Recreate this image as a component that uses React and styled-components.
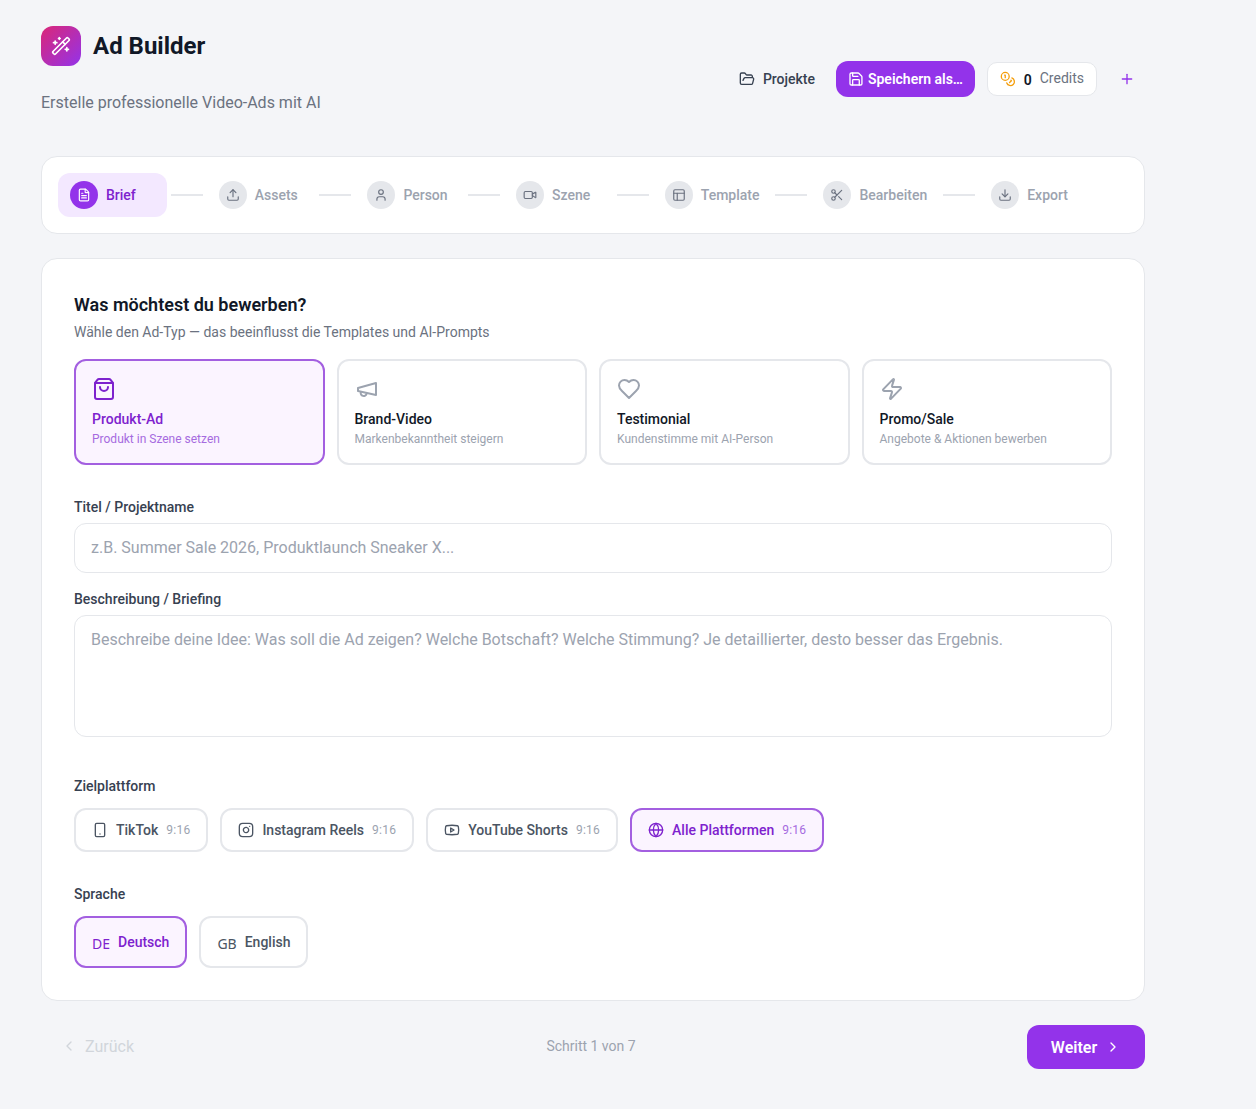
import styled, { createGlobalStyle } from 'styled-components'
import {
  WandSparkles, FolderOpen, Save, Coins, Plus, FileText, Upload, User, Video, Layout,
  Scissors, Download, ShoppingBag, Zap, Smartphone, Instagram, Youtube,
  Globe, ChevronLeft, ChevronRight,
} from 'lucide-react'

const LineIcon = ({ size, children }) => (
  <svg width={size} height={size} viewBox="0 0 24 24" fill="none" stroke="currentColor" strokeWidth="2" strokeLinecap="round" strokeLinejoin="round">
    {children}
  </svg>
)

const MegaphoneIcon = ({ size }) => (
  <LineIcon size={size}>
    <path d="m3 11 18-5v12L3 14v-3z" />
    <path d="M11.6 16.8a3 3 0 1 1-5.8-1.6" />
  </LineIcon>
)

const HeartIcon = ({ size }) => (
  <LineIcon size={size}>
    <path d="M19 14c1.49-1.46 3-3.21 3-5.5A5.5 5.5 0 0 0 16.5 3c-1.76 0-3 .5-4.5 2-1.5-1.5-2.74-2-4.5-2A5.5 5.5 0 0 0 2 8.5c0 2.3 1.5 4.05 3 5.5l7 7Z" />
  </LineIcon>
)

const steps = [
  { label: 'Brief', icon: FileText, active: true },
  { label: 'Assets', icon: Upload },
  { label: 'Person', icon: User },
  { label: 'Szene', icon: Video },
  { label: 'Template', icon: Layout },
  { label: 'Bearbeiten', icon: Scissors },
  { label: 'Export', icon: Download },
]

const adTypes = [
  { title: 'Produkt-Ad', text: 'Produkt in Szene setzen', icon: ShoppingBag, active: true },
  { title: 'Brand-Video', text: 'Markenbekanntheit steigern', icon: MegaphoneIcon },
  { title: 'Testimonial', text: 'Kundenstimme mit AI-Person', icon: HeartIcon },
  { title: 'Promo/Sale', text: 'Angebote & Aktionen bewerben', icon: Zap },
]

const platforms = [
  { label: 'TikTok', icon: Smartphone },
  { label: 'Instagram Reels', icon: Instagram },
  { label: 'YouTube Shorts', icon: Youtube },
  { label: 'Alle Plattformen', icon: Globe, active: true },
]

export default function App() {
  return (
    <Page>
      <GlobalStyle />
      <Header>
        <Brand>
          <BrandRow>
            <Logo><WandSparkles size={20} color="#fff" /></Logo>
            <Title>Ad Builder</Title>
          </BrandRow>
          <Subtitle>Erstelle professionelle Video-Ads mit AI</Subtitle>
        </Brand>
        <Actions>
          <GhostButton><FolderOpen size={16} />Projekte</GhostButton>
          <SaveButton><Save size={16} />Speichern als…</SaveButton>
          <Credits>
            <Coins size={16} color="#f59e0b" />
            <CreditCount>0</CreditCount>
            <CreditLabel>Credits</CreditLabel>
          </Credits>
          <AddButton><Plus size={16} /></AddButton>
        </Actions>
      </Header>

      <Stepper>
        {steps.map((step, i) => (
          <StepGroup key={step.label}>
            {i > 0 && <StepLine />}
            <Step $active={step.active}>
              <StepCircle $active={step.active}><step.icon size={14} /></StepCircle>
              {step.label}
            </Step>
          </StepGroup>
        ))}
      </Stepper>

      <Card>
        <CardTitle>Was möchtest du bewerben?</CardTitle>
        <CardText>Wähle den Ad-Typ — das beeinflusst die Templates und AI-Prompts</CardText>
        <TypeGrid>
          {adTypes.map((type) => (
            <TypeCard key={type.title} $active={type.active}>
              <TypeIcon $active={type.active}><type.icon size={24} /></TypeIcon>
              <TypeTitle $active={type.active}>{type.title}</TypeTitle>
              <TypeText $active={type.active}>{type.text}</TypeText>
            </TypeCard>
          ))}
        </TypeGrid>

        <FieldLabel>Titel / Projektname</FieldLabel>
        <TextInput placeholder="z.B. Summer Sale 2026, Produktlaunch Sneaker X..." />
        <BriefLabel>Beschreibung / Briefing</BriefLabel>
        <TextArea placeholder="Beschreibe deine Idee: Was soll die Ad zeigen? Welche Botschaft? Welche Stimmung? Je detaillierter, desto besser das Ergebnis." />

        <PlatformLabel>Zielplattform</PlatformLabel>
        <ChoiceRow>
          {platforms.map((p) => (
            <PlatformButton key={p.label} $active={p.active}>
              <p.icon size={16} />
              {p.label}
              <Ratio $active={p.active}>9:16</Ratio>
            </PlatformButton>
          ))}
        </ChoiceRow>

        <LanguageLabel>Sprache</LanguageLabel>
        <ChoiceRow>
          <LanguageButton $active><Flag>DE</Flag>Deutsch</LanguageButton>
          <LanguageButton><Flag>GB</Flag>English</LanguageButton>
        </ChoiceRow>
      </Card>

      <Footer>
        <BackButton><ChevronLeft size={16} />Zurück</BackButton>
        <StepCount>Schritt 1 von 7</StepCount>
        <NextButton>Weiter<ChevronRight size={16} /></NextButton>
      </Footer>
    </Page>
  )
}

/*---> Styles <---*/
const GlobalStyle = createGlobalStyle`
  * { box-sizing: border-box; }
  html, body { margin: 0; padding: 0; background: #f4f5f8; }
  body { font-family: Roboto, "Liberation Sans", sans-serif; color: #111827; }
  button, input, textarea { font-family: inherit; }
`

const Page = styled.div`
  width: 1186px;
  min-height: 1109px;
  padding: 26px 0 40px 41px;
`

const Header = styled.header`
  width: 1104px;
  height: 106px;
  margin-bottom: 24px;
  display: flex;
  justify-content: space-between;
  align-items: center;
`

const Brand = styled.div`
  height: 106px;
  display: flex;
  flex-direction: column;
`

const BrandRow = styled.div`
  display: flex;
  align-items: center;
  gap: 12px;
`

const Logo = styled.div`
  width: 40px;
  height: 40px;
  border-radius: 12px;
  background: linear-gradient(135deg, #db2777, #9333ea);
  display: flex;
  align-items: center;
  justify-content: center;
`

const Title = styled.h1`
  margin: 0;
  font-size: 24px;
  line-height: 40px;
  font-weight: 700;
  color: #111827;
`

const Subtitle = styled.p`
  margin: 25px 0 0;
  font-size: 16px;
  line-height: 24px;
  color: #6b7280;
`

const Actions = styled.div`
  margin-right: 10px;
  display: flex;
  align-items: center;
`

const GhostButton = styled.button`
  height: 36px;
  padding: 0 20px 0 0;
  border: 0;
  background: transparent;
  display: flex;
  align-items: center;
  gap: 8px;
  font-size: 14px;
  font-weight: 500;
  color: #374151;
  transform: translateX(-1px);
`

const SaveButton = styled.button`
  width: 139px;
  height: 36px;
  padding: 0 12px;
  border: 0;
  border-radius: 12px;
  background: #9333ea;
  color: #fff;
  display: flex;
  align-items: center;
  gap: 4px;
  font-size: 14px;
  font-weight: 600;
  white-space: nowrap;
`

const Credits = styled.div`
  width: 110px;
  height: 34px;
  margin-left: 12px;
  padding: 0 12px;
  border: 1px solid #e5e7eb;
  border-radius: 10px;
  background: #fff;
  display: flex;
  align-items: center;
  gap: 8px;
`

const CreditCount = styled.span`
  padding-top: 2px;
  font-size: 14px;
  font-weight: 600;
  color: #111827;
`

const CreditLabel = styled.span`
  padding-bottom: 2px;
  font-size: 14px;
  color: #6b7280;
`

const AddButton = styled.button`
  width: 16px;
  height: 16px;
  margin-left: 22px;
  padding: 0;
  border: 0;
  background: transparent;
  color: #9333ea;
  display: flex;
`

const Stepper = styled.nav`
  width: 1104px;
  height: 78px;
  padding: 0 16px;
  border: 1px solid #e5e7eb;
  border-radius: 16px;
  background: #fff;
  display: flex;
  align-items: center;
`

const StepGroup = styled.div`
  display: flex;
  align-items: center;
`

const StepLine = styled.div`
  width: 32px;
  height: 2px;
  margin: 0 4px;
  background: #e5e7eb;
`

const Step = styled.div`
  min-width: 108.7px;
  height: 44px;
  padding: 0 12px;
  border-radius: 12px;
  display: flex;
  align-items: center;
  gap: 8px;
  font-size: 14px;
  font-weight: 500;
  background: ${(props) => (props.$active ? '#f3e8ff' : 'transparent')};
  color: ${(props) => (props.$active ? '#7e22ce' : '#9ca3af')};
`

const StepCircle = styled.div`
  width: 28px;
  height: 28px;
  border-radius: 50%;
  display: flex;
  align-items: center;
  justify-content: center;
  background: ${(props) => (props.$active ? '#9333ea' : '#e5e7eb')};
  color: ${(props) => (props.$active ? '#fff' : '#6b7280')};
`

const Card = styled.main`
  width: 1104px;
  height: 743px;
  margin-top: 24px;
  padding: 32px;
  border: 1px solid #e5e7eb;
  border-radius: 16px;
  background: #fff;
`

const CardTitle = styled.h2`
  margin: 0;
  font-size: 18px;
  line-height: 28px;
  font-weight: 600;
  color: #111827;
`

const CardText = styled.p`
  margin: 3px 0 0;
  font-size: 14px;
  line-height: 20px;
  color: #6b7280;
`

const TypeGrid = styled.div`
  margin-top: 17px;
  display: grid;
  grid-template-columns: repeat(4, 1fr);
  gap: 12px;
`

const TypeCard = styled.div`
  height: 106px;
  padding: 16px;
  border: 2px solid ${(props) => (props.$active ? '#a35fe0' : '#e5e7eb')};
  border-radius: 12px;
  background: ${(props) => (props.$active ? '#fbf4ff' : '#fff')};
`

const TypeIcon = styled.div`
  height: 24px;
  display: flex;
  color: ${(props) => (props.$active ? '#7e22ce' : '#9ca3af')};
`

const TypeTitle = styled.div`
  margin-top: 8px;
  font-size: 14px;
  line-height: 20px;
  font-weight: 500;
  color: ${(props) => (props.$active ? '#7e22ce' : '#111827')};
`

const TypeText = styled.div`
  margin-top: 2px;
  font-size: 12px;
  line-height: 16px;
  color: ${(props) => (props.$active ? '#a66be0' : '#9ca3af')};
`

const FieldLabel = styled.label`
  display: block;
  margin-top: 32px;
  font-size: 14px;
  line-height: 20px;
  font-weight: 500;
  color: #374151;
`

const BriefLabel = styled(FieldLabel)`
  margin-top: 16px;
`

const PlatformLabel = styled(FieldLabel)`
  margin-top: 39px;
`

const LanguageLabel = styled(FieldLabel)`
  margin-top: 32px;
`

const TextInput = styled.input`
  display: block;
  width: 100%;
  height: 50px;
  margin-top: 6px;
  padding: 0 16px 2px;
  border: 1px solid #e5e7eb;
  border-radius: 12px;
  background: #fff;
  font-size: 16px;
  &::placeholder { color: #9ca3af; }
`

const TextArea = styled.textarea`
  display: block;
  width: 100%;
  height: 122px;
  margin-top: 6px;
  padding: 12px 16px;
  border: 1px solid #e5e7eb;
  border-radius: 12px;
  background: #fff;
  font-size: 16px;
  line-height: 24px;
  resize: none;
  &::placeholder { color: #9ca3af; }
`

const ChoiceRow = styled.div`
  margin-top: 12px;
  display: flex;
  gap: 12px;
`

const PlatformButton = styled.button`
  height: 44px;
  padding: 0 16px;
  border: 2px solid ${(props) => (props.$active ? '#a35fe0' : '#e5e7eb')};
  border-radius: 12px;
  background: ${(props) => (props.$active ? '#fbf4ff' : '#fff')};
  color: ${(props) => (props.$active ? '#7e22ce' : '#4b5563')};
  display: flex;
  align-items: center;
  gap: 8px;
  font-size: 14px;
  font-weight: 500;
`

const Ratio = styled.span`
  font-size: 12px;
  font-weight: 400;
  letter-spacing: 0.25px;
  color: ${(props) => (props.$active ? '#a66be0' : '#9ca3af')};
`

const LanguageButton = styled.button`
  height: 52px;
  padding: 0 16px;
  border: 2px solid ${(props) => (props.$active ? '#a35fe0' : '#e5e7eb')};
  border-radius: 12px;
  background: ${(props) => (props.$active ? '#fbf4ff' : '#fff')};
  color: ${(props) => (props.$active ? '#7e22ce' : '#4b5563')};
  display: flex;
  align-items: center;
  gap: 8px;
  font-size: 14px;
  font-weight: 500;
`

const Flag = styled.span`
  padding-top: 3px;
  font-family: "Noto Sans", sans-serif;
  font-size: 14px;
  font-weight: 400;
`

const Footer = styled.footer`
  width: 1104px;
  height: 44px;
  margin-top: 24px;
  display: flex;
  align-items: center;
  justify-content: space-between;
`

const BackButton = styled.button`
  width: 120px;
  padding: 0 0 2px 20px;
  border: 0;
  background: transparent;
  color: #d1d5db;
  display: flex;
  align-items: center;
  gap: 8px;
  font-size: 16px;
`

const StepCount = styled.span`
  margin-left: -6px;
  padding-bottom: 2px;
  font-size: 14px;
  color: #9ca3af;
`

const NextButton = styled.button`
  width: 118px;
  height: 44px;
  border: 0;
  border-radius: 12px;
  background: #9333ea;
  color: #fff;
  display: flex;
  align-items: center;
  justify-content: center;
  gap: 8px;
  font-size: 16px;
  font-weight: 600;
`
